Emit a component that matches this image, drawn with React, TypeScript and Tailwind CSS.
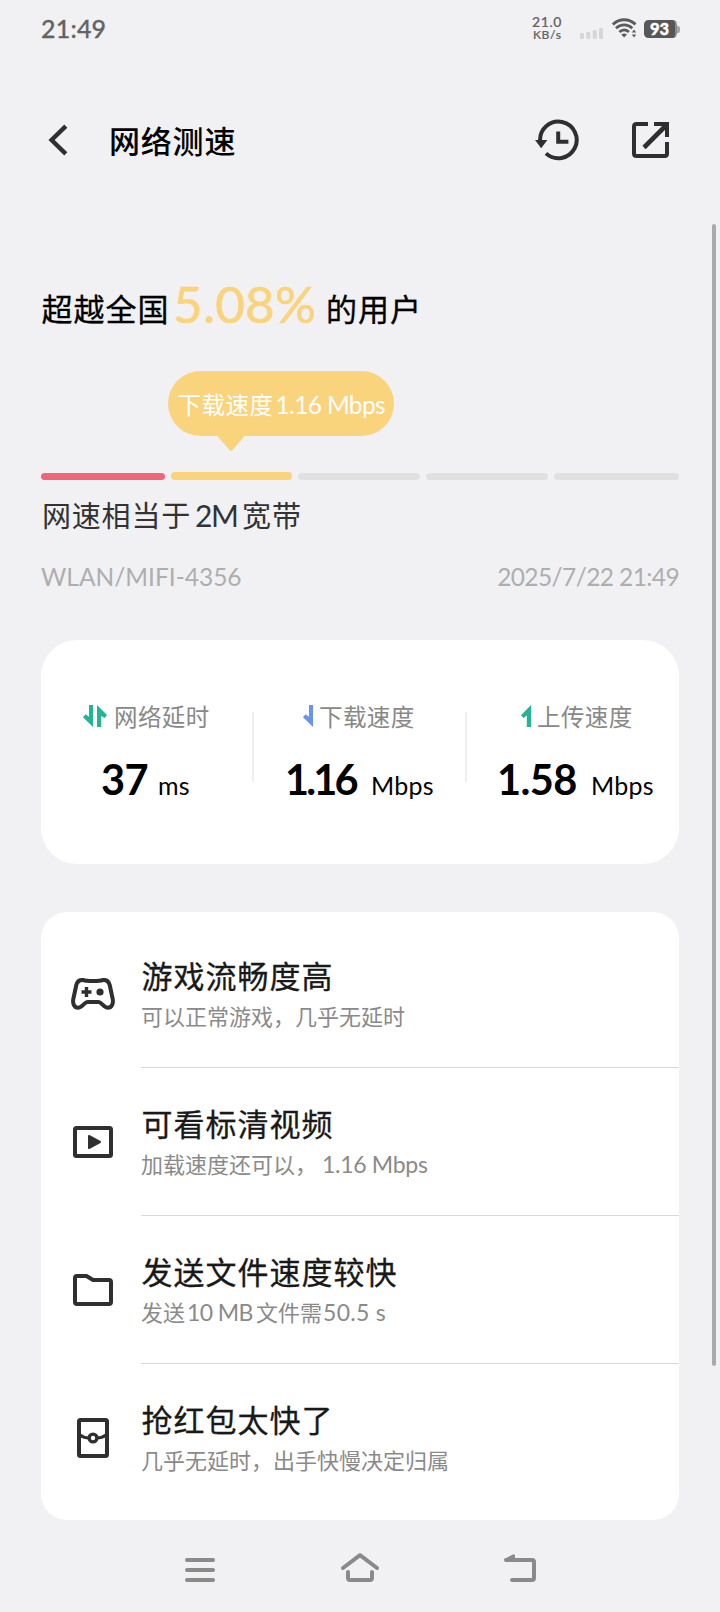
import type { ReactNode } from "react";

const CJK = "font-['Noto_Sans_CJK_SC',sans-serif]";
const LATIN = "font-['Lato','Noto_Sans_CJK_SC',sans-serif]";

function StatusBar() {
  return (
    <div className={`flex h-14 items-center pl-[41px] pr-[40px] text-[#636363] ${LATIN}`}>
      <span className="text-[25px] font-medium leading-[55px] tracking-[0.2px] [-webkit-text-stroke:0.3px_#636363]">21:49</span>
      <div className="ml-auto flex items-center">
        <div className="flex w-[48px] flex-col font-medium [-webkit-text-stroke:0.2px_#636363]">
          <span className="text-[14px] leading-[13px] tracking-[0.6px]">21.0</span>
          <span className="pl-px text-[12px] leading-[13px] tracking-[0.6px]">KB/s</span>
        </div>
        <svg className="h-[24px] w-[24px]" viewBox="0 0 24 24" fill="#d6d6d8">
          <rect x="0" y="17" width="4" height="6" rx="1.2" />
          <rect x="6.3" y="16" width="4" height="7" rx="1.2" />
          <rect x="12.7" y="14" width="4" height="9" rx="1.2" />
          <rect x="19" y="12" width="4" height="11" rx="1.2" />
        </svg>
        <svg className="ml-[8px] h-[24px] w-[25px]" viewBox="0 0 25 24" fill="none" stroke="#5c5c5c">
          <path d="M0.8 8.4C7.5 2.2 16.8 2.2 23.5 8.4" strokeWidth="2.8" />
          <path d="M4 12.2C8.8 7.8 15.5 7.8 20.3 12.2" strokeWidth="2.8" />
          <path d="M7.4 16C10.2 13.2 14 13.2 16.9 16" strokeWidth="2.8" />
          <path d="M9.3 18.6Q12.1 16.6 15 18.6L12.1 21.6Z" fill="#5c5c5c" stroke="none" />
          <path d="M22 13.4L24.2 16.4H19.8ZM22 21.6L24.2 18.4H19.8Z" fill="#5c5c5c" stroke="none" />
        </svg>
        <div className="ml-[7px] mt-[2px] flex items-center">
          <span className="flex h-[18px] w-[33px] items-center justify-center rounded-[4.5px] border-r-2 border-[#8b8b8b] bg-[#575757] text-[16.5px] font-black leading-[18px] text-white [-webkit-text-stroke:0.4px_#fff]">
            93
          </span>
          <span className="h-[7px] w-[3px] rounded-r-[2px] bg-[#a6a6a8]" />
        </div>
      </div>
    </div>
  );
}

function Header() {
  return (
    <div className="flex h-[168px] items-center pl-[48px] pr-[50px]">
      <svg className="h-[32px] w-[20px]" viewBox="0 0 20 32" fill="none" stroke="#2f2f2f" strokeWidth="4.4">
        <path d="M17.8 2.2L3.6 16L17.8 29.8" />
      </svg>
      <h1 className={`-mt-[1px] ml-[41px] text-[31px] font-medium leading-[48px] tracking-[0.8px] text-black ${CJK}`}>
        网络测速
      </h1>
      <svg className="ml-auto h-[44px] w-[44px]" viewBox="0 0 44 44" fill="none" stroke="#2f2f2f" strokeWidth="4">
        <path d="M5.1 23A18.3 18.3 0 1 1 11 35.4" />
        <path d="M0 22H12.4L6.2 30.2Z" fill="#2f2f2f" stroke="none" />
        <path d="M23.2 13.5V23.7H33.4" />
      </svg>
      <svg className="ml-[52px] h-[38px] w-[39px]" viewBox="0 0 39 38" fill="none" stroke="#2f2f2f" strokeWidth="4">
        <path d="M17 3H5.5Q3 3 3 5.500V32.500Q3 35 5.500 35H33.500Q36 35 36 32.500V21" />
        <path d="M23 3H36V16" />
        <path d="M13 26.500L35 4.500" strokeWidth="4.600" />
      </svg>
    </div>
  );
}

function Bubble() {
  return (
    <div className="relative ml-[127px] flex h-[65px] w-[226px] items-baseline rounded-full bg-[#fad37d] pl-[9.500px] text-white">
      <span className={`w-[98px] whitespace-nowrap text-[23.500px] leading-[66px] tracking-[0.5px] ${CJK}`}>下载速度</span>
      <span className={`whitespace-nowrap text-[24.5px] leading-[66px] tracking-[-0.65px] ${LATIN}`}>1.16 Mbps</span>
      <svg className="absolute left-[48px] top-[64px] h-[17px] w-[30px]" viewBox="0 0 30 17" fill="#fad37d">
        <path d="M0.500 0H29.500L16.300 15.200Q15 16.600 13.700 15.200Z" />
      </svg>
    </div>
  );
}

function Hero() {
  return (
    <section className="flex h-[416px] flex-col px-[41px] pt-[50px]">
      <div className="flex h-[97px] items-start text-black">
        <span className={`w-[132px] whitespace-nowrap pl-[0.5px] pt-[4px] text-[31px] leading-[60px] tracking-[1px] [-webkit-text-stroke:0.3px_#000] ${CJK}`}>
          超越全国
        </span>
        <span className={`w-[153px] whitespace-nowrap text-[51px] leading-[60px] text-[#fad37d] [-webkit-text-stroke:0.7px_#fad37d] tracking-[0.3px] ${LATIN}`}>
          5.08%
        </span>
        <span className={`whitespace-nowrap pt-[4px] text-[31px] leading-[60px] tracking-[1px] [-webkit-text-stroke:0.3px_#000] ${CJK}`}>
          的用户
        </span>
      </div>
      <Bubble />
      <div className="mt-[36px] flex h-[8px] items-end gap-[6px]">
        <span className="h-[7px] w-[124px] rounded-full bg-[#ef667b]" />
        <span className="h-[8px] w-[121px] rounded-full bg-[#fad37d]" />
        <span className="h-[7px] w-[122px] rounded-full bg-[#e0e0e0]" />
        <span className="h-[7px] w-[122px] rounded-full bg-[#e0e0e0]" />
        <span className="h-[7px] w-[125px] rounded-full bg-[#e0e0e0]" />
      </div>
      <div className="mt-[14px] flex h-[66px] items-baseline text-[30px] leading-[40px] text-[#333]">
        <span className={`w-[154px] whitespace-nowrap pl-px text-[29px] tracking-[0.8px] ${CJK}`}>网速相当于</span>
        <span className={`w-[47px] whitespace-nowrap tracking-[-1.5px] ${LATIN}`}>2M</span>
        <span className={`whitespace-nowrap text-[29px] tracking-[1px] ${CJK}`}>宽带</span>
      </div>
      <div className={`flex justify-between text-[24.5px] leading-[33px] text-[#aeaeae] ${LATIN}`}>
        <span>WLAN/MIFI-4356</span>
        <span className="tracking-[-0.6px]">2025/7/22 21:49</span>
      </div>
    </section>
  );
}

const DOWN = "M6 0H10V22L0 12.300L2.600 9.300L6 11.800Z";
const UP = "M10 22H5.800V10.500L2.400 13L0 10.200L10 0Z";

type MetricProps = {
  icon: ReactNode;
  label: string;
  value: string;
  unit: string;
  labelPad: string;
  valuePad: string;
  valueWidth: string;
};

function Metric({ icon, label, value, unit, labelPad, valuePad, valueWidth }: MetricProps) {
  return (
    <div className="flex flex-col pt-[58px]">
      <div className={`flex h-[36px] items-center ${labelPad}`}>
        {icon}
        <span className={`whitespace-nowrap text-[23.5px] leading-[32px] tracking-[0.4px] text-[#888] ${CJK}`}>{label}</span>
      </div>
      <div className={`mt-[19px] flex items-baseline text-black ${LATIN} ${valuePad}`}>
        <span className={`whitespace-nowrap text-[41.5px] font-bold leading-[52px] ${valueWidth}`}>{value}</span>
        <span className="whitespace-nowrap text-[25px] leading-[52px] tracking-[0.2px]">{unit}</span>
      </div>
    </div>
  );
}

function Metrics() {
  return (
    <section className="mx-[41px] grid h-[224px] w-[638px] grid-cols-[211px_2px_211px_2px_212px] rounded-[36px] bg-white">
      <Metric
        icon={
          <svg className="mr-[7px] h-[22px] w-[24px]" viewBox="0 0 24 22" fill="#25b397">
            <path d={DOWN} />
            <path d="M14 22H18.200V11L21.600 12.900L24 10L14 0Z" />
          </svg>
        }
        label="网络延时"
        value="37"
        unit="ms"
        labelPad="pl-[42px]"
        valuePad="pl-[60px]"
        valueWidth="w-[57px] tracking-[-0.5px]"
      />
      <span className="mt-[72px] h-[70px] bg-[#efeff0]" />
      <Metric
        icon={
          <svg className="mr-[6px] h-[22px] w-[10px]" viewBox="0 0 10 22" fill="#6a94e9">
            <path d={DOWN} />
          </svg>
        }
        label="下载速度"
        value="1.16"
        unit="Mbps"
        labelPad="pl-[49px]"
        valuePad="pl-[31px]"
        valueWidth="w-[86px] tracking-[-2.8px]"
      />
      <span className="mt-[72px] h-[70px] bg-[#efeff0]" />
      <Metric
        icon={
          <svg className="mr-[6px] h-[22px] w-[10px]" viewBox="0 0 10 22" fill="#25b397">
            <path d={UP} />
          </svg>
        }
        label="上传速度"
        value="1.58"
        unit="Mbps"
        labelPad="pl-[54px]"
        valuePad="pl-[30px]"
        valueWidth="w-[94px] tracking-[-0.6px]"
      />
    </section>
  );
}

function GameIcon() {
  return (
    <svg className="h-[32px] w-[44px]" viewBox="0 0 44 32" fill="none" stroke="#2f2f2f" strokeWidth="4" strokeLinejoin="round">
      <path d="M12 2C16 3.400 28 3.400 32 2C36 1.600 37.700 3.500 38.700 7L41.700 21C42.600 26 40.500 29.800 37 29.800C33 29.800 30.500 24 27.500 24H16.500C13.500 24 11 29.800 7 29.800C3.500 29.800 1.400 26 2.300 21L5.300 7C6.300 3.500 8 1.600 12 2Z" />
      <path d="M15.500 9V19M10.500 14H20.500" strokeWidth="3.400" />
      <circle cx="29" cy="14" r="3.600" fill="#2f2f2f" stroke="none" />
    </svg>
  );
}

function VideoIcon() {
  return (
    <svg className="h-[32px] w-[40px]" viewBox="0 0 40 32" fill="none" stroke="#2f2f2f" strokeWidth="4">
      <rect x="2" y="2" width="36" height="28" rx="1.500" />
      <path d="M16 10L27 16L16 22Z" fill="#2f2f2f" strokeWidth="2" strokeLinejoin="round" />
    </svg>
  );
}

function FolderIcon() {
  return (
    <svg className="h-[32px] w-[40px]" viewBox="0 0 40 32" fill="none" stroke="#2f2f2f" strokeWidth="4">
      <path d="M4 2H13.500L20 6H36Q38 6 38 8V28Q38 30 36 30H4Q2 30 2 28V4Q2 2 4 2Z" />
    </svg>
  );
}

function PacketIcon() {
  return (
    <svg className="h-[40px] w-[32px]" viewBox="0 0 32 40" fill="none" stroke="#2f2f2f" strokeWidth="4">
      <rect x="2" y="2" width="28" height="36" rx="1.500" />
      <path d="M3 17Q7 20 12 20M20 20Q25 20 29 17" strokeWidth="3" />
      <circle cx="16" cy="20" r="3.900" strokeWidth="3.400" />
    </svg>
  );
}

function Row({ icon, title, children, last }: { icon: ReactNode; title: string; children: ReactNode; last?: boolean }) {
  return (
    <div className="flex h-[148px]">
      <div className="ml-[30px] flex w-[44px] items-center justify-center">{icon}</div>
      <div className={`ml-[26px] flex flex-1 flex-col pt-[35px] ${last ? "" : "border-b border-[#d9d9d9]"}`}>
        <h2 className={`pl-[0.5px] text-[31px] leading-[40px] tracking-[1px] text-[#191919] [-webkit-text-stroke:0.3px_#191919] ${CJK}`}>
          {title}
        </h2>
        <div className={`mt-[4px] flex items-baseline whitespace-pre text-[22px] leading-[32px] text-[#8a8a8a] ${CJK}`}>
          {children}
        </div>
      </div>
    </div>
  );
}

function Abilities() {
  return (
    <section className="mx-[41px] mt-[48px] h-[608px] w-[638px] rounded-[26px] bg-white py-[8px]">
      <Row icon={<GameIcon />} title="游戏流畅度高">
        <span>可以正常游戏，几乎无延时</span>
      </Row>
      <Row icon={<VideoIcon />} title="可看标清视频">
        <span className="w-[181px]">加载速度还可以，</span>
        <span className={`text-[23px] tracking-[-0.3px] ${LATIN}`}>1.16 Mbps</span>
      </Row>
      <Row icon={<FolderIcon />} title="发送文件速度较快">
        <span className="w-[46px]">发送</span>
        <span className={`w-[69px] text-[23px] tracking-[-0.6px] ${LATIN}`}>10 MB</span>
        <span className="w-[67px]">文件需</span>
        <span className={`text-[23px] tracking-[0.3px] ${LATIN}`}>50.5 s</span>
      </Row>
      <Row icon={<PacketIcon />} title="抢红包太快了" last>
        <span>几乎无延时，出手快慢决定归属</span>
      </Row>
    </section>
  );
}

function NavBar() {
  return (
    <nav className="flex h-[92px] items-start justify-between pl-[185px] pr-[184px] pt-[32px]">
      <svg className="h-[32px] w-[30px]" viewBox="0 0 30 32" fill="none" stroke="#8a8a8a" strokeWidth="4" strokeLinecap="round">
        <path d="M2 8H28M2 18H28M2 28H28" />
      </svg>
      <svg className="h-[32px] w-[38px]" viewBox="0 0 38 32" fill="none" stroke="#8a8a8a" strokeWidth="4" strokeLinecap="round" strokeLinejoin="round">
        <path d="M2 16L19 3.200L36 16" />
        <path d="M7 20V26Q7 28 9 28H29Q31 28 31 26V20" />
      </svg>
      <svg className="h-[32px] w-[32px]" viewBox="0 0 32 32" fill="none" stroke="#8a8a8a" strokeWidth="4" strokeLinecap="round" strokeLinejoin="round">
        <path d="M2 8H28Q30 8 30 10V26Q30 28 28 28H8" />
        <path d="M2 7.800L9.500 3.800V8Z" fill="#8a8a8a" strokeWidth="3" />
      </svg>
    </nav>
  );
}

export default function App() {
  return (
    <div className="relative flex h-[1612px] w-[720px] flex-col overflow-hidden bg-[#f1f1f4]">
      <StatusBar />
      <Header />
      <Hero />
      <Metrics />
      <Abilities />
      <NavBar />
      <span className="absolute right-[4px] top-[224px] h-[1142px] w-[4px] rounded-full bg-[#a9a9ab]" />
    </div>
  );
}
